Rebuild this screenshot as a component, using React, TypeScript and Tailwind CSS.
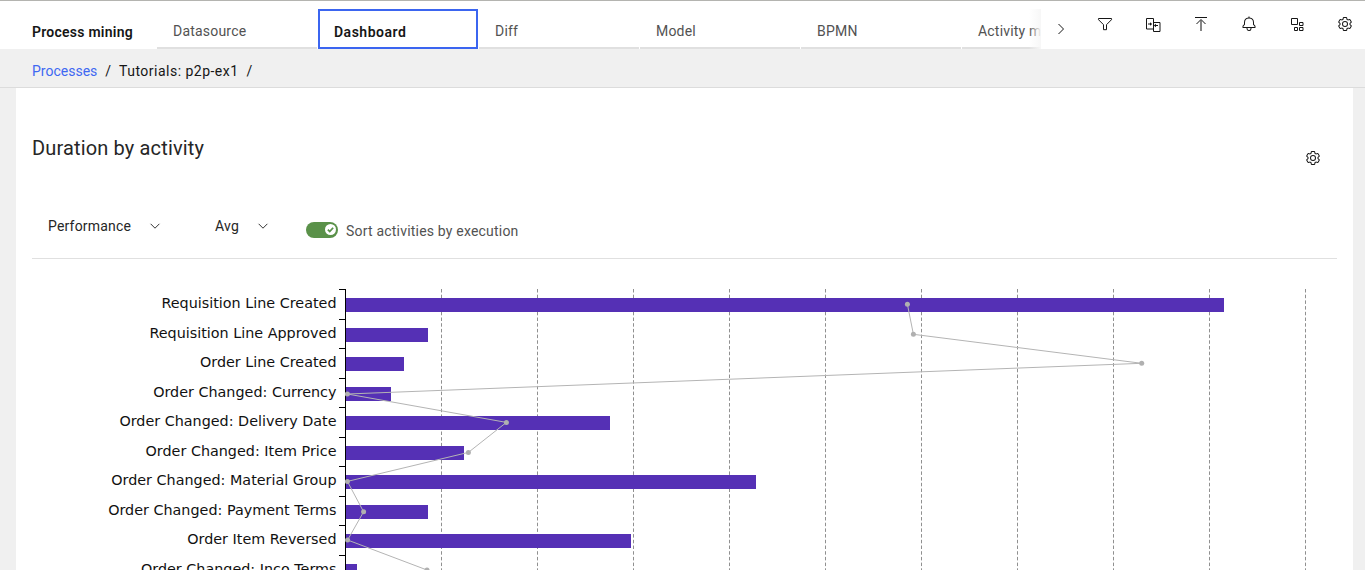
import React from "react";

const labels = [
  "Requisition Line Created",
  "Requisition Line Approved",
  "Order Line Created",
  "Order Changed: Currency",
  "Order Changed: Delivery Date",
  "Order Changed: Item Price",
  "Order Changed: Material Group",
  "Order Changed: Payment Terms",
  "Order Item Reversed",
  "Order Changed: Inco Terms",
];
const barEnds = [1224, 428, 404, 391, 610, 464, 756, 428, 631, 357];
const barTops = [298, 328, 357, 387, 416, 446, 475, 505, 534, 564];
const labelY = [303, 333, 362, 392, 421, 451, 480, 510, 539, 569];
const ticks = [289, 319, 348, 378, 407, 437, 466, 496, 525, 555];
const grid = [441, 537, 633, 729, 825, 921, 1017, 1113, 1209, 1305];
const pts: [number, number][] = [
  [907.4, 304.3], [913.4, 334.3], [1141.7, 363.3], [347.4, 394], [506.4, 422.4],
  [468.4, 452.4], [347.4, 481.4], [363.6, 511.8], [347.6, 540], [427, 570],
];
const TOP = 259;

function Tab({ label, active }: { label: string; active?: boolean }) {
  return active ? (
    <div className="flex h-10 w-40 shrink-0 items-center border-2 border-[#3b65f0] pl-3.5 pt-[6px] text-sm font-semibold tracking-[0.5px] text-[#161616]">
      {label}
    </div>
  ) : (
    <div className="flex h-10 w-40 shrink-0 items-center border-b-2 border-[#e0e0e0] pl-4 pt-[6px] text-sm tracking-[0.2px] text-[#525252]">
      {label}
    </div>
  );
}

function Chevron({ className }: { className: string }) {
  return (
    <svg viewBox="0 0 16 16" className={className} fill="none" stroke="#161616" strokeWidth="1">
      <path d="M3 5.5 8 10.5 13 5.5" />
    </svg>
  );
}

function Gear({ className }: { className: string }) {
  return (
    <svg viewBox="0 0 32 32" className={className} fill="#161616">
      <path d="M27,16.76c0-.25,0-.5,0-.76s0-.51,0-.77l1.92-1.68A2,2,0,0,0,29.3,11L26.94,7a2,2,0,0,0-1.73-1,2,2,0,0,0-.64.1l-2.43.82a11.35,11.35,0,0,0-1.31-.75l-.51-2.52a2,2,0,0,0-2-1.61H13.64a2,2,0,0,0-2,1.61l-.51,2.52a11.48,11.48,0,0,0-1.32.75L7.43,6.06A2,2,0,0,0,6.79,6,2,2,0,0,0,5.06,7L2.7,11a2,2,0,0,0,.41,2.51L5,15.24c0,.25,0,.5,0,.76s0,.51,0,.77L3.11,18.45A2,2,0,0,0,2.7,21L5.06,25a2,2,0,0,0,1.73,1,2,2,0,0,0,.64-.1l2.43-.82a11.35,11.35,0,0,0,1.31.75l.51,2.52a2,2,0,0,0,2,1.61h4.72a2,2,0,0,0,2-1.61l.51-2.52a11.48,11.48,0,0,0,1.32-.75l2.42.82a2,2,0,0,0,.64.1,2,2,0,0,0,1.73-1L29.3,21a2,2,0,0,0-.41-2.51ZM25.21,24l-3.43-1.16a8.86,8.86,0,0,1-2.71,1.57L18.36,28H13.64l-.71-3.55a9.36,9.36,0,0,1-2.7-1.57L6.79,24,4.43,20l2.72-2.4a8.9,8.9,0,0,1,0-3.13L4.43,12,6.79,8l3.43,1.16a8.86,8.86,0,0,1,2.71-1.57L13.64,4h4.72l.71,3.55a9.36,9.36,0,0,1,2.7,1.57L25.21,8,27.57,12l-2.72,2.4a8.9,8.9,0,0,1,0,3.13L27.57,20Z" />
      <path d="M16,22a6,6,0,1,1,6-6A5.94,5.94,0,0,1,16,22Zm0-10a3.91,3.91,0,0,0-4,4,3.91,3.91,0,0,0,4,4,3.91,3.91,0,0,0,4-4A3.91,3.91,0,0,0,16,12Z" />
    </svg>
  );
}

function ToolIcons() {
  return (
    <>
      <div className="flex h-12 w-12 items-center justify-center">
        <svg viewBox="0 0 16 16" className="h-4 w-4" fill="none" stroke="#161616" strokeWidth="1">
          <path d="M1.5 2.5h13v1.2L9.5 8.7v5h-3v-5L1.5 3.7z" />
        </svg>
      </div>
      <div className="flex h-12 w-12 items-center justify-center">
        <svg viewBox="0 0 16 16" className="h-4 w-4" fill="none" stroke="#161616" strokeWidth="1">
          <path d="M8.5 13H1.5V2.5h7zM8.5 6.5H15V15.5H8.5V13" />
          <path d="M3 8h2.5M10.5 9.5H13" />
          <path d="M5 6.3 7.2 8 5 9.7zM11 7.8 8.8 9.5 11 11.2z" fill="#161616" stroke="none" />
        </svg>
      </div>
      <div className="flex h-12 w-12 items-center justify-center">
        <svg viewBox="0 0 16 16" className="h-4 w-4" fill="none" stroke="#161616" strokeWidth="1">
          <path d="M2 1.5h12" />
          <path d="M3.5 8 8 3.5 12.5 8" />
          <path d="M8 15V4" stroke="#5c5c5c" strokeWidth="1.5" />
        </svg>
      </div>
      <div className="flex h-12 w-12 items-center justify-center">
        <svg viewBox="0 0 32 32" className="h-4 w-4" fill="#161616">
          <path d="M28.7071,19.293,26,16.5859V13a10.0136,10.0136,0,0,0-9-9.9492V1H15V3.0508A10.0136,10.0136,0,0,0,6,13v3.5859L3.2929,19.293A1,1,0,0,0,3,20v3a1,1,0,0,0,1,1h7v.7768a5.152,5.152,0,0,0,4.5,5.1987A5.0057,5.0057,0,0,0,21,25V24h7a1,1,0,0,0,1-1V20A1,1,0,0,0,28.7071,19.293ZM19,25a3,3,0,0,1-6,0V24h6Zm8-3H5V20.4141L7.707,17.707A1,1,0,0,0,8,17V13a8,8,0,0,1,16,0v4a1,1,0,0,0,.293.707L27,20.4141Z" />
        </svg>
      </div>
      <div className="flex h-12 w-12 items-center justify-center">
        <svg viewBox="0 0 16 16" className="h-4 w-4" fill="none" stroke="#161616" strokeWidth="1">
          <path d="M2.5 2.5h6v6h-6zM10.5 6.5h3.5v3h-3.5zM10.5 11.5h3.5v3h-3.5zM5.5 11.5h3v3h-3z" />
        </svg>
      </div>
      <div className="flex h-12 w-12 items-center justify-center">
        <Gear className="h-4 w-4" />
      </div>
    </>
  );
}

export default function App() {
  return (
    <div className="flex h-[570px] w-full flex-col overflow-hidden bg-[#f0f0f0] font-['Roboto',sans-serif]">
      <header className="flex h-[49px] shrink-0 border-t border-[#b4b4b0] bg-white">
        <div className="flex w-[157px] shrink-0 items-center pl-8 pt-[13px] text-sm font-semibold tracking-[0.25px] text-[#161616]">
          Process mining
        </div>
        <div className="relative flex min-w-0 flex-1 gap-px self-end overflow-hidden">
          <Tab label="Datasource" />
          <Tab label="Dashboard" active />
          <Tab label="Diff" />
          <Tab label="Model" />
          <Tab label="BPMN" />
          <Tab label="Activity map" />
          <div className="absolute inset-y-0 right-0 w-3 bg-gradient-to-r from-transparent to-[#f7f7f7]" />
        </div>
        <div className="flex w-[324px] shrink-0 pl-px">
          <div className="flex h-12 w-10 items-center justify-center pl-0.5 pt-2">
            <svg viewBox="0 0 16 16" className="h-4 w-4" fill="none" stroke="#161616" strokeWidth="1">
              <path d="M5.5 3 10.5 8 5.5 13" />
            </svg>
          </div>
          <div className="flex -translate-y-px translate-x-[4px]">
            <ToolIcons />
          </div>
        </div>
      </header>

      <nav className="flex h-[39px] shrink-0 items-center gap-2 border-b border-[#dcdcdc] pt-[5px] pl-8 text-sm text-[#161616]">
        <span className="text-[#3f68f2]">Processes</span>
        <span>/</span>
        <span className="tracking-[0.48px]">Tutorials: p2p-ex1</span>
        <span>/</span>
      </nav>

      <div className="ml-4 mr-3 flex min-h-0 flex-1 flex-col bg-white px-4">
        <div className="flex h-[112px] shrink-0 items-start justify-between">
          <h1 className="mt-[46px] text-xl leading-7 tracking-[0.15px] text-[#262626]">Duration by activity</h1>
          <Gear className="mr-4 mt-[62px] h-4 w-4" />
        </div>
        <div className="flex h-[59px] shrink-0 border-b border-[#e0e0e0] pt-[6px] text-sm tracking-[0.2px] text-[#262626]">
          <div className="ml-4 flex h-10 w-[167px] items-center gap-[17px]">
            <span>Performance</span>
            <Chevron className="h-3.5 w-3.5" />
          </div>
          <div className="flex h-10 w-[91px] items-center gap-[17px]">
            <span>Avg</span>
            <Chevron className="h-3.5 w-3.5" />
          </div>
          <div className="flex h-10 items-center gap-2 pt-[9px]">
            <div className="relative mb-[2px] h-4 w-8 rounded-full bg-[#5a9149]">
              <div className="absolute right-[2px] top-[2.5px] flex h-[11px] w-[11px] items-center justify-center rounded-full bg-white">
                <svg viewBox="0 0 10 10" className="h-[11px] w-[11px]" fill="none" stroke="#5a9149" strokeWidth="1.6">
                  <path d="M2.6 5.2 4.3 6.9 7.4 3.4" />
                </svg>
              </div>
            </div>
            <span className="text-[#525252]">Sort activities by execution</span>
          </div>
        </div>
        <svg className="-ml-8 shrink-0" width="1353" height="311" viewBox={`0 ${TOP} 1353 311`}>
          {grid.map((x) => (
            <line key={x} x1={x + 0.5} x2={x + 0.5} y1={289} y2={570} stroke="#909090" strokeDasharray="3.5 2.2" strokeWidth="1" />
          ))}
          {barEnds.map((end, i) => (
            <rect key={i} x={345} y={barTops[i]} width={end - 345} height={14} fill="#5530b5" />
          ))}
          <line x1={345.5} x2={345.5} y1={289} y2={570} stroke="#000" />
          {ticks.map((y) => (
            <line key={y} x1={339} x2={345} y1={y + 0.5} y2={y + 0.5} stroke="#000" />
          ))}
          {labels.map((t, i) => (
            <text key={t} x={336.5} y={labelY[i] + 5} textAnchor="end" fontSize="14.35" fill="#111" fontFamily="'DejaVu Sans', sans-serif">
              {t}
            </text>
          ))}
          <polyline points={pts.map((p) => p.join(",")).join(" ")} fill="none" stroke="#b4b4b4" strokeWidth="1" />
          {pts.map((p, i) => (
            <circle key={i} cx={p[0]} cy={p[1]} r={2.5} fill="#b0b0b0" />
          ))}
        </svg>
      </div>
    </div>
  );
}
